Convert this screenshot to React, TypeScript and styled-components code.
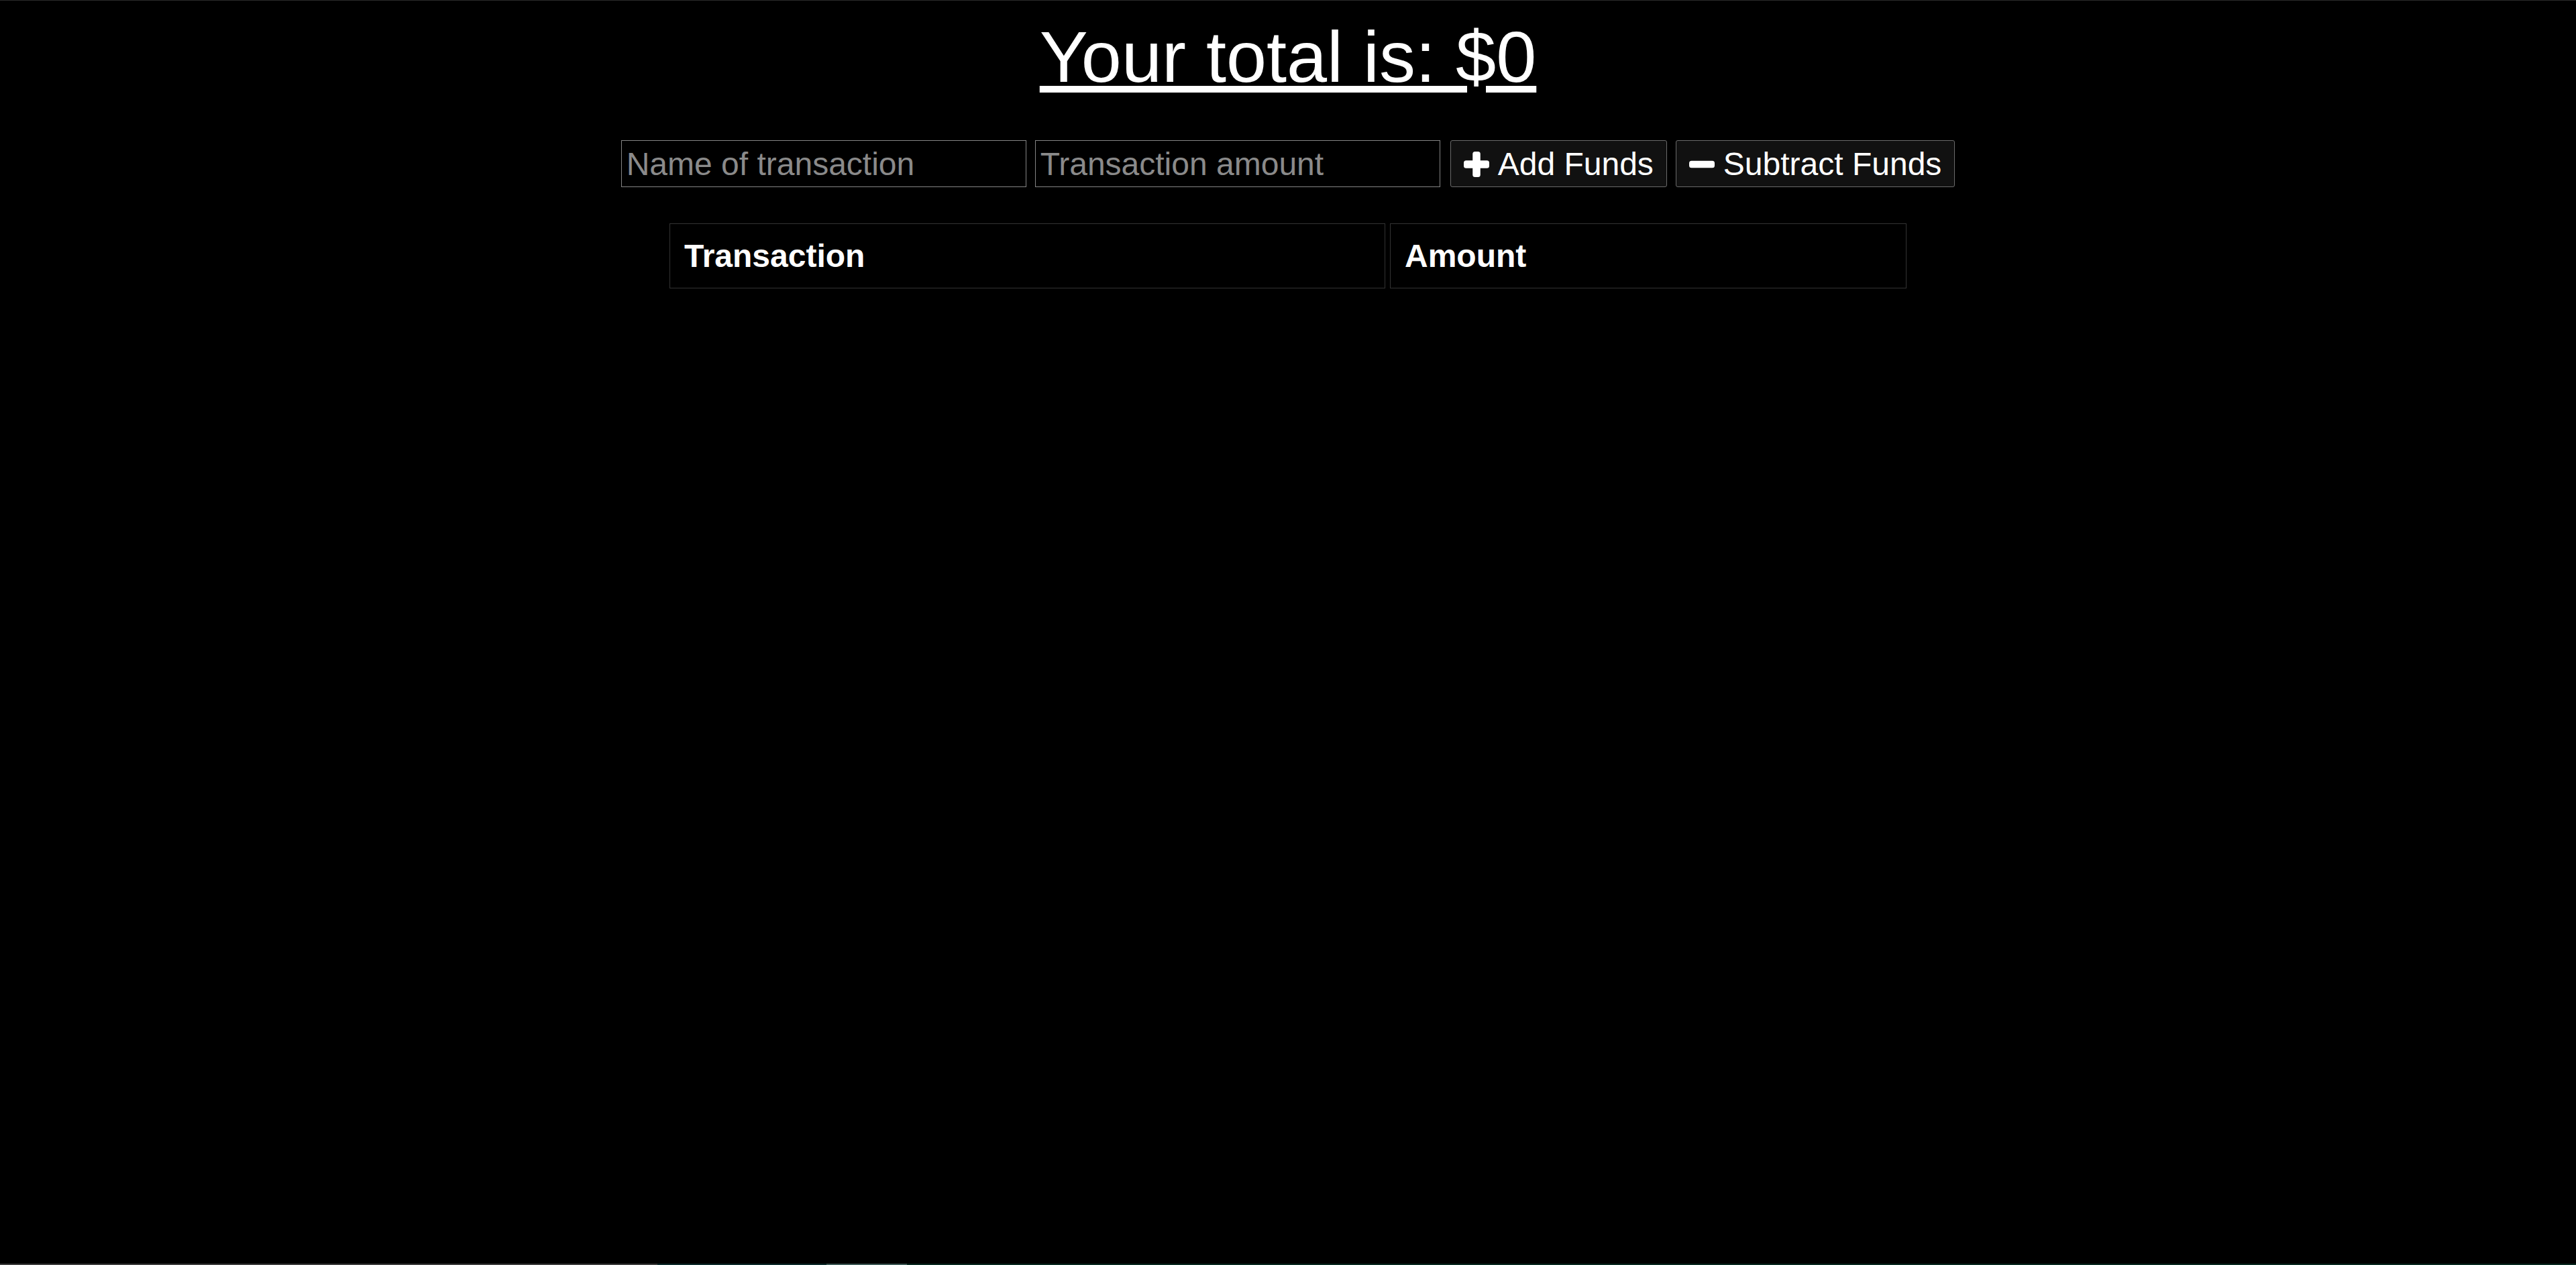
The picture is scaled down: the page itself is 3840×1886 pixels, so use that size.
import React from "react";
import styled, { createGlobalStyle } from "styled-components";

const GlobalStyle = createGlobalStyle`
  html, body {
    margin: 0;
    padding: 0;
    background: #000;
  }
  body {
    font-family: "Liberation Sans", Arial, sans-serif;
    color: #fff;
  }
  * { box-sizing: border-box; }
`;

const Page = styled.div`
  min-height: 100vh;
  display: flex;
  flex-direction: column;
  align-items: center;
  background: #000;
  border-top: 1px solid #2b2b2b;
`;

const Title = styled.h1`
  margin: 21px 0 0;
  font-size: 108px;
  font-weight: 400;
  line-height: normal;
  text-decoration: underline;
  color: #fff;
`;

const Form = styled.div`
  margin-top: 62px;
  display: flex;
  align-items: stretch;
  gap: 13px;
`;

const Field = styled.input`
  width: 604px;
  height: 70px;
  padding: 0 7px;
  background: #000;
  color: #fff;
  border: 1px solid #858585;
  border-radius: 0;
  font-family: "Liberation Sans", Arial, sans-serif;
  font-size: 48px;
  outline: none;
  &::placeholder {
    color: #8a8a8a;
  }
`;

const Buttons = styled.div`
  display: flex;
  gap: 13px;
  margin-left: 2px;
`;

const FundButton = styled.button`
  height: 70px;
  display: flex;
  align-items: center;
  gap: 13px;
  padding: 0 19px;
  background: #111;
  color: #fff;
  border: 1px solid #6a6a6a;
  border-radius: 3px;
  font-family: "Liberation Sans", Arial, sans-serif;
  font-size: 48px;
  line-height: normal;
  cursor: pointer;
`;

const Icon = styled.svg`
  width: 38px;
  height: 38px;
  flex: none;
  margin-top: 1px;
`;

const Table = styled.table`
  margin-top: 47px;
  border-collapse: separate;
  border-spacing: 7px;
`;

const HeadCell = styled.th<{ $w: number }>`
  width: ${(p) => p.$w}px;
  padding: 20px 21px;
  border: 1px solid #333;
  text-align: left;
  font-size: 48px;
  font-weight: 700;
  line-height: normal;
  color: #fff;
`;

const Spacer = styled.div`
  flex: 1;
`;

const BottomStrip = styled.div`
  align-self: stretch;
  height: 2px;
  display: flex;
`;

const Segment = styled.div<{ $w: string; $c: string }>`
  width: ${(p) => p.$w};
  flex: ${(p) => (p.$w === "auto" ? "1" : "none")};
  background: ${(p) => p.$c};
`;

const PlusIcon = () => (
  <Icon viewBox="0 0 38 38" aria-hidden="true">
    <rect x="13.25" y="0" width="11.5" height="38" rx="3.5" fill="#fff" />
    <rect x="0" y="13.25" width="38" height="11.5" rx="3.5" fill="#fff" />
  </Icon>
);

const MinusIcon = () => (
  <Icon viewBox="0 0 38 38" aria-hidden="true">
    <rect x="0" y="13.75" width="38" height="10.5" rx="3.5" fill="#fff" />
  </Icon>
);

export default function App() {
  return (
    <>
      <GlobalStyle />
      <Page>
        <Title>Your total is: $0</Title>
        <Form>
          <Field type="text" placeholder="Name of transaction" />
          <Field type="number" placeholder="Transaction amount" />
          <Buttons>
            <FundButton type="button">
              <PlusIcon />
              Add Funds
            </FundButton>
            <FundButton type="button">
              <MinusIcon />
              Subtract Funds
            </FundButton>
          </Buttons>
        </Form>
        <Table>
          <thead>
            <tr>
              <HeadCell $w={1067}>Transaction</HeadCell>
              <HeadCell $w={770}>Amount</HeadCell>
            </tr>
          </thead>
          <tbody />
        </Table>
        <Spacer />
        <BottomStrip>
          <Segment $w="980px" $c="#3c3c3c" />
          <Segment $w="252px" $c="#0c2b2b" />
          <Segment $w="120px" $c="#3c5955" />
          <Segment $w="auto" $c="#08291f" />
        </BottomStrip>
      </Page>
    </>
  );
}
